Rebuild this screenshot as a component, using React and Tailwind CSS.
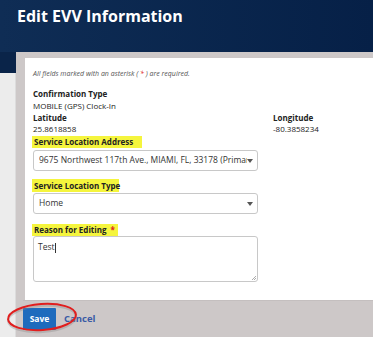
import React from "react";

function Caret() {
  return (
    <svg width="6" height="4" viewBox="0 0 6 4" className="shrink-0">
      <path d="M0 0 L6 0 L3 4 Z" fill="#555" />
    </svg>
  );
}

function SelectBox({ children }) {
  return (
    <div className="w-[225px] h-[21px] border border-[#c8c8c8] rounded-[3px] bg-white flex items-center pl-[5px] pr-[4px]">
      <div className="flex-1 overflow-hidden whitespace-nowrap text-[8.5px] text-[#333]">{children}</div>
      <Caret />
    </div>
  );
}

function Hl({ children, w }) {
  return (
    <div className={`bg-[#f5f53d] h-[12px] flex items-center pl-[2px] whitespace-nowrap text-[8px] font-bold text-[#222] ${w}`}>
      {children}
    </div>
  );
}

export default function App() {
  return (
    <div
      className="w-[373px] h-[337px] overflow-hidden relative flex flex-col bg-[#0b254a]"
      style={{ fontFamily: '"Open Sans", "Liberation Sans", sans-serif' }}
    >
      <div className="h-[52px] shrink-0 bg-gradient-to-r from-[#0f2d55] to-[#062047] pl-[17px] pt-[4px]">
        <div className="text-white font-bold text-[16px] leading-[24px]">Edit EVV Information</div>
      </div>
      <div className="flex-1 flex">
        <div className="w-[16px] flex flex-col">
          <div className="h-[21px] bg-[#0a2449]" />
          <div className="flex-1 bg-[#ececec] border-r border-[#dcdcdc]" />
        </div>
        <div className="flex-1 flex flex-col bg-[#cdc8c8] pt-[6px] pl-[9px]">
          <div className="h-[242px] bg-white pl-[8px] pt-[11px] text-[#222]">
            <div className="text-[7px] italic text-[#555] leading-[10px]">
              All fields marked with an asterisk ( <span className="text-[#d22]">*</span> ) are required.
            </div>
            <div className="mt-[9px] text-[8px] leading-[11px] font-bold">Confirmation Type</div>
            <div className="mt-[1px] text-[8px] leading-[11px]">MOBILE (GPS) Clock-In</div>
            <div className="flex">
              <div className="w-[240px]">
                <div className="mt-[1px] text-[8px] leading-[11px] font-bold">Latitude</div>
                <div className="text-[8px] leading-[11px]">25.8618858</div>
              </div>
              <div>
                <div className="mt-[1px] text-[8px] leading-[11px] font-bold">Longitude</div>
                <div className="text-[8px] leading-[11px]">-80.3858234</div>
              </div>
            </div>
            <div className="mt-[2px] -ml-[1px]">
              <Hl w="w-[110px]">Service Location Address</Hl>
            </div>
            <div className="mt-[2px]">
              <SelectBox>9675 Northwest 117th Ave., MIAMI, FL, 33178 (Primary)</SelectBox>
            </div>
            <div className="mt-[8px] -ml-[1px]">
              <Hl w="w-[87px] h-[13px]">Service Location Type</Hl>
            </div>
            <div className="mt-[1px]">
              <SelectBox>Home</SelectBox>
            </div>
            <div className="mt-[10px] -ml-[1px]">
              <Hl w="w-[86px]">
                Reason for Editing <span className="text-[#e02020] ml-[4px]">*</span>
              </Hl>
            </div>
            <div className="w-[225px] h-[46px] border border-[#c8c8c8] rounded-[3px] bg-white pl-[4px] pt-[4px] text-[8.5px] text-[#333] relative">
              Test<span className="inline-block w-[1px] h-[10px] bg-[#333] align-middle" />
              <svg className="absolute right-[1px] bottom-[1px]" width="5" height="5" viewBox="0 0 5 5">
                <path d="M1 5 L5 1 M3 5 L5 3" stroke="#999" strokeWidth="0.8" />
              </svg>
            </div>
          </div>
          <div className="flex-1 border-t border-[#c4bfbf] flex items-center -ml-[2px]">
            <div className="w-[33px] h-[22px] bg-[#1e6bbd] text-white font-bold text-[8.5px] flex items-center justify-center rounded-[1px]">
              Save
            </div>
            <div className="ml-[8px] text-[9.5px] font-bold text-[#3b5ba5]">Cancel</div>
          </div>
        </div>
      </div>
      <svg className="absolute left-0 top-0 pointer-events-none" width="373" height="337">
        <ellipse cx="42" cy="319" rx="34" ry="13" fill="none" stroke="#888" strokeOpacity="0.35" strokeWidth="2" transform="rotate(-4 42 319)" />
        <ellipse cx="42" cy="317" rx="34" ry="13" fill="none" stroke="#e01e1e" strokeWidth="2" transform="rotate(-4 42 317)" />
      </svg>
    </div>
  );
}
